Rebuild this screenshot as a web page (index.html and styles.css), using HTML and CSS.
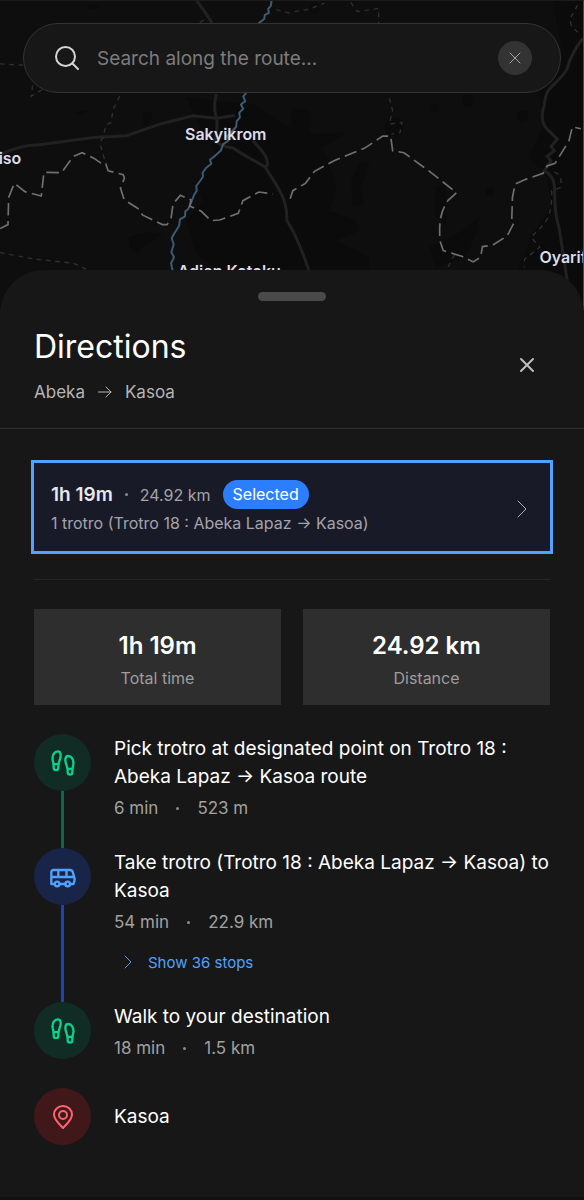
FILE: index.html
```html
<!DOCTYPE html>
<html lang="en">
<head>
<meta charset="utf-8">
<meta name="viewport" content="width=device-width, initial-scale=1">
<title>Directions</title>
<link rel="stylesheet" href="styles.css">
</head>
<body>
<svg class="defs" aria-hidden="true">
  <symbol id="feet" viewBox="0 0 24 24"><path d="M4 16v-2.38C4 11.5 2.97 10.5 3 8c.03-2.72 1.49-6 4.5-6C9.37 2 10 3.8 10 5.5c0 3.11-2 5.66-2 8.68V16a2 2 0 1 1-4 0Z"/><path d="M20 20v-2.38c0-2.12 1.03-3.12 1-5.62-.03-2.72-1.49-6-4.5-6C14.63 6 14 7.8 14 9.5c0 3.11 2 5.66 2 8.68V20a2 2 0 1 0 4 0Z"/><path d="M16 17h4M4 13h4"/></symbol>
  <symbol id="bus" viewBox="0 0 24 24"><path d="M8 6v6M15 6v6M2 12h19.6M18 18h3s.5-1.7.8-2.800c.1-.4.2-.8.2-1.200 0-.4-.1-.8-.2-1.200l-1.400-5C20.100 6.800 19.100 6 18 6H4a2 2 0 0 0-2 2v10h3M9 18h5"/><circle cx="7" cy="18" r="2"/><circle cx="16" cy="18" r="2"/></symbol>
</svg>
<main class="app">
  <section class="map-area" aria-label="Map">
    <svg class="map" viewBox="0 0 1752 930" preserveAspectRatio="xMidYMin slice" aria-hidden="true">
      <g class="land">
        <path d="M560 290L640 300 760 310 850 370 940 410 985 470 1010 560 990 630 1070 660 1080 690 1010 720 1110 770 1100 930H640L680 820 590 760 560 660 610 600 590 540 650 470Z"/>
        <path d="M876 325L930 325 930 400 1040 395 990 430 920 450 876 430Z"/>
        <path d="M1080 490L1110 480 1085 560 1095 610 1060 615 1055 540ZM1310 560L1340 550 1340 670 1310 650ZM1375 700L1440 650 1430 700 1400 770 1310 800 1290 740Z"/>
        <path d="M1660 0L1752 0V930H1520L1560 800 1600 700 1660 610 1640 520 1590 470 1630 380 1620 250 1690 150Z"/>
        <circle cx="1408" cy="300" r="19"/><circle cx="1303" cy="321" r="12"/><circle cx="1184" cy="378" r="28"/><circle cx="1472" cy="573" r="12"/><circle cx="1570" cy="347" r="17"/><circle cx="945" cy="22" r="16"/>
        <path d="M430 335L460 335 450 365 430 375ZM385 710L440 695 490 700 430 735 415 760 390 740ZM265 8L300 8 295 24 270 24ZM225 335L265 330 245 345Z"/>
      </g>
      <g class="road">
        <path d="M0 462Q55 434 120 432L280 410 380 405 480 370 580 345 650 352 706 344"/>
        <path d="M592 0Q630 50 650 90M650 280Q640 320 650 350Q656 380 646 420Q660 435 700 442C740 470 760 475 798 500C830 555 865 590 862 660Q890 700 928 808M760 420Q820 480 798 500"/>
        <path d="M1752 112Q1720 150 1704 204C1680 250 1640 250 1636 310Q1620 360 1644 385L1675 415 1656 437 1666 450 1644 467 1656 480 1636 510C1690 540 1650 590 1680 680L1706 850"/>
      </g>
      <g class="minor-border">
        <path d="M0 189L68 193M98 254L94 286 128 266M360 286L340 325 334 365 318 372 310 410 300 426 318 490M0 756L100 775 220 788 258 806M600 64L616 56M830 26L876 38M885 32L930 25 975 6M1054 4L1074 32 1138 22 1138 70M1170 292L1180 330 1170 370 1208 365 1202 396 1176 400M1736 12L1712 55 1718 78 1740 96M1666 514Q1690 520 1686 560L1658 570Q1660 640 1634 672L1596 710 1622 740 1576 776 1576 800M1366 762L1344 804"/>
      </g>
      <path class="river" d="M816 0l-2 14 -8 10 2 12-12 6-2 12-18 14-20 70-22 84 5 55-8 10 6 14-13 10 7 13-12 12 2 14-10 12-1 16-17 18-10 10 5 12-18 13-6 18-22 20-11 8 4 12-16 13-10 14 1 12-9 13-11 15 1 14-8 13-9 24-9 19-8 6-1 15-15 9-3 20-14 22-8 15 6 18-7 24 8 15-9 18 5 22-8 28"/>
      <path class="border" d="M0 684L24 672 26 590 43 548 75 573 124 586 132 515 185 516 220 467 247 456 283 473 310 492 318 490 325 510 370 522 374 532 362 562 373 597 417 625 428 643 488 672 502 672 514 654 520 610 542 584 574 598 570 616 605 632 634 660 660 658 716 638 730 600 778 574 820 580M872 594L880 570 918 548 945 512 1004 480 1096 442 1150 406 1174 406 1180 450 1214 456 1288 510 1372 576 1346 600C1320 640 1320 670 1322 720L1332 750 1390 768 1422 784 1444 770 1450 738 1480 734 1524 706 1544 668 1538 656 1540 590 1548 550 1580 536 1632 518 1644 496 1668 488 1710 420 1720 378 1746 384"/>
      <g class="place">
        <text x="556" y="418">Sakyikrom</text>
        <text x="-4" y="490">iso</text>
        <text x="534" y="828">Adjen Kotoku</text>
        <text x="1621" y="787">Oyarifa</text>
      </g>
    </svg>
    <form class="search" role="search">
      <svg class="icon search-icon" viewBox="0 0 24 24" aria-hidden="true"><circle cx="10.500" cy="10.500" r="9.500"/><path d="M17.500 17.500L23 23"/></svg>
      <input class="search-input" type="text" aria-label="Search along the route" placeholder="Search along the route...">
      <button class="clear" type="button" aria-label="Clear search"><svg class="icon clear-icon" viewBox="0 0 10 10" aria-hidden="true"><path d="M0 0L10 10M10 0L0 10"/></svg></button>
    </form>
  </section>

  <section class="sheet">
    <div class="handle"></div>
    <header class="sheet-head">
      <div>
        <h1 class="title">Directions</h1>
        <p class="trip"><span>Abeka</span><svg class="icon trip-arrow" viewBox="0 0 14 12" aria-hidden="true"><path d="M0 6H13M8 1L13 6 8 11"/></svg><span>Kasoa</span></p>
      </div>
      <button class="close" type="button" aria-label="Close"><svg class="icon close-icon" viewBox="0 0 16 16" aria-hidden="true"><path d="M2 2L14 14M14 2L2 14"/></svg></button>
    </header>

    <div class="content">
      <button class="route" type="button">
        <span class="route-text">
          <span class="route-top"><strong class="route-time">1h 19m</strong><span class="dot"></span><span class="route-km">24.92 km</span><span class="badge">Selected</span></span>
          <span class="route-desc">1 trotro (Trotro 18 : Abeka Lapaz → Kasoa)</span>
        </span>
        <svg class="icon chevron" viewBox="0 0 10 18" aria-hidden="true"><path d="M1 1L9 9 1 17"/></svg>
      </button>
      <hr class="rule">
      <div class="stats">
        <div class="stat"><strong class="stat-value">1h 19m</strong><span class="stat-label">Total time</span></div>
        <div class="stat"><strong class="stat-value">24.92 km</strong><span class="stat-label">Distance</span></div>
      </div>
      <ol class="steps">
        <li class="step walk">
          <div class="rail"><span class="bubble"><svg class="icon step-icon" aria-hidden="true"><use href="#feet"/></svg></span></div>
          <div class="step-body"><h2 class="step-title">Pick trotro at designated point on Trotro 18 : Abeka Lapaz → Kasoa route</h2><p class="meta"><span>6 min</span><span class="dot"></span><span>523 m</span></p></div>
        </li>
        <li class="step ride">
          <div class="rail"><span class="bubble"><svg class="icon step-icon" aria-hidden="true"><use href="#bus"/></svg></span></div>
          <div class="step-body"><h2 class="step-title">Take trotro (Trotro 18 : Abeka Lapaz → Kasoa) to Kasoa</h2><p class="meta"><span>54 min</span><span class="dot"></span><span>22.9 km</span></p>
            <button class="stops" type="button"><svg class="icon stops-icon" viewBox="0 0 8 12" aria-hidden="true"><path d="M1 0L7 6 1 12"/></svg>Show 36 stops</button></div>
        </li>
        <li class="step walk last-leg">
          <div class="rail"><span class="bubble"><svg class="icon step-icon" aria-hidden="true"><use href="#feet"/></svg></span></div>
          <div class="step-body"><h2 class="step-title">Walk to your destination</h2><p class="meta"><span>18 min</span><span class="dot"></span><span>1.5 km</span></p></div>
        </li>
        <li class="step arrive">
          <div class="rail"><span class="bubble"><svg class="icon pin-icon" viewBox="0 0 20 24" aria-hidden="true"><path d="M10 23C7 19.500 1 15 1 9.500a9 8.500 0 0 1 18 0C19 15 13 19.500 10 23Z"/><circle cx="10" cy="10" r="4"/></svg></span></div>
          <h2 class="step-title">Kasoa</h2>
        </li>
      </ol>
    </div>
  </section>
</main>
</body>
</html>
```
FILE: styles.css
```css
* { box-sizing: border-box; }
body {
  margin: 0;
  background: #171717;
  color: #fff;
  font-family: Inter, "Liberation Sans", sans-serif;
}
h1, h2, p, ol { margin: 0; padding: 0; font-weight: 400; }
button, input { font: inherit; color: inherit; border: 0; background: none; padding: 0; }
button { cursor: pointer; }
.defs { position: absolute; width: 0; height: 0; }
.icon { display: block; flex: none; fill: none; stroke: currentColor; stroke-linecap: round; stroke-linejoin: round; }

.app { min-height: 100vh; display: flex; flex-direction: column; border-bottom: 4px solid #111; }
.map-area {
  position: relative;
  height: 310px;
  padding: 22px 22px 22px 23px;
  overflow: hidden;
  background: #0e0e0f;
  border-top: 1px solid #1c1c1d;
  border-right: 1px solid #4a4a4a;
}
.map { position: absolute; inset: 0; width: 100%; height: 100%; fill: none; }
.land { fill: #0b0b0b; }
.road { stroke: #212121; stroke-width: 9; }
.minor-border { stroke: #2e3133; stroke-width: 4; stroke-dasharray: 14 14; }
.river { stroke: #3c5a70; stroke-width: 6; stroke-linejoin: round; }
.border { stroke: #707073; stroke-width: 5; stroke-dasharray: 38 16; }
.place { fill: #dcdcea; font-size: 48px; font-weight: 600; }

.search {
  position: relative;
  display: flex;
  align-items: center;
  height: 70px;
  padding: 0 28px 0 31px;
  border: 1px solid #333;
  border-radius: 35px;
  background: #171717;
}
.search-icon { width: 24px; height: 24px; color: #d4d4d4; stroke-width: 2; }
.search-input { flex: 1; min-width: 0; margin-left: 18px; font-size: 19px; outline: 0; }
.search-input::placeholder { color: #7c7c7c; opacity: 1; }
.clear {
  display: grid;
  place-items: center;
  width: 34px;
  height: 34px;
  border-radius: 50%;
  background: #333;
  color: #a3a3a3;
}
.clear-icon { width: 10px; height: 10px; overflow: visible; }

.sheet {
  position: relative;
  flex: 1;
  margin-top: -40px;
  padding-top: 22px;
  border-radius: 44px 44px 0 0;
  background: #171717;
}
.handle { width: 68px; height: 9px; margin: 0 auto; border-radius: 5px; background: #4a4a4a; }
.sheet-head {
  display: flex;
  align-items: center;
  justify-content: space-between;
  padding: 23px 34px;
  border-bottom: 1px solid #303030;
}
.title { font-size: 32px; line-height: 46px; }
.trip { display: flex; align-items: center; gap: 13px; margin-top: 9px; font-size: 17px; line-height: 26px; color: #b5b5b5; }
.trip-arrow { width: 14px; height: 12px; }
.close { display: grid; place-items: center; width: 46px; height: 46px; color: #bdbdbd; }
.close-icon { width: 16px; height: 16px; stroke-width: 2; }

.content { padding: 34px 34px 52px; }
.route {
  display: flex;
  align-items: center;
  justify-content: space-between;
  width: 100%;
  padding: 17px 23px 14px 17px;
  outline: 3px solid #51a2ff;
  background: #181a28;
  text-align: left;
}
.route-text, .route-top { display: flex; }
.route-text { flex-direction: column; }
.route-top { align-items: center; }
.route-time { font-size: 19px; font-weight: 600; color: #e8e8ec; }
.dot { flex: none; width: 3px; height: 3px; border-radius: 50%; background: #8b8b8e; }
.route-top .dot { margin: 0 12px; }
.route-km { font-size: 16px; color: #a4a4aa; }
.badge {
  margin-left: 12px;
  padding: 0 10px;
  border-radius: 15px;
  background: #2b7fff;
  font-size: 16px;
  line-height: 29px;
}
.route-desc { font-size: 16px; line-height: 28px; color: #a4a4aa; }
.chevron { width: 10px; height: 18px; color: #b0b0b8; }
.rule { height: 1px; margin: 28px 0 29px; border: 0; background: #242424; }

.stats { display: grid; grid-template-columns: 1fr 1fr; gap: 22px; }
.stat {
  display: flex;
  flex-direction: column;
  align-items: center;
  padding: 18px 12px 14px;
  background: #2e2e2e;
}
.stat-value { font-size: 24px; line-height: 38px; font-weight: 600; }
.stat-label { font-size: 16px; line-height: 26px; color: #9d9d9d; }

.steps { margin-top: 29px; list-style: none; }
.step { display: flex; gap: 23px; font-size: 19px; }
.rail { flex: none; width: 57px; display: flex; flex-direction: column; align-items: center; }
.bubble { display: grid; place-items: center; width: 57px; height: 57px; border-radius: 50%; }
.step-icon { width: 28px; height: 28px; stroke-width: 2; }
.rail::after { content: ""; flex: 1; width: 3px; }
.walk .bubble { background: #102c24; color: #08d28c; }
.walk .rail::after { background: #086b4b; }
.ride .bubble { background: #182448; color: #51a2ff; }
.ride .rail::after { background: #1c43b8; }
.last-leg .rail::after { background: none; }
.arrive .bubble { background: #411819; color: #ff646c; }
.pin-icon { width: 20px; height: 24px; stroke-width: 2; }
.step-title { font-size: 19px; line-height: 28px; }
.step-body { flex: 1; min-width: 0; padding: 1px 0 28px; }
.arrive { align-items: center; }
.meta { display: flex; align-items: center; gap: 18px; margin-top: 5px; font-size: 17px; line-height: 24px; color: #a1a1a1; }
.stops { display: flex; align-items: center; gap: 16px; height: 24px; margin-top: 16px; margin-left: 10px; font-size: 15px; color: #51a2ff; }
.stops-icon { width: 8px; height: 12px; overflow: visible; }
```
